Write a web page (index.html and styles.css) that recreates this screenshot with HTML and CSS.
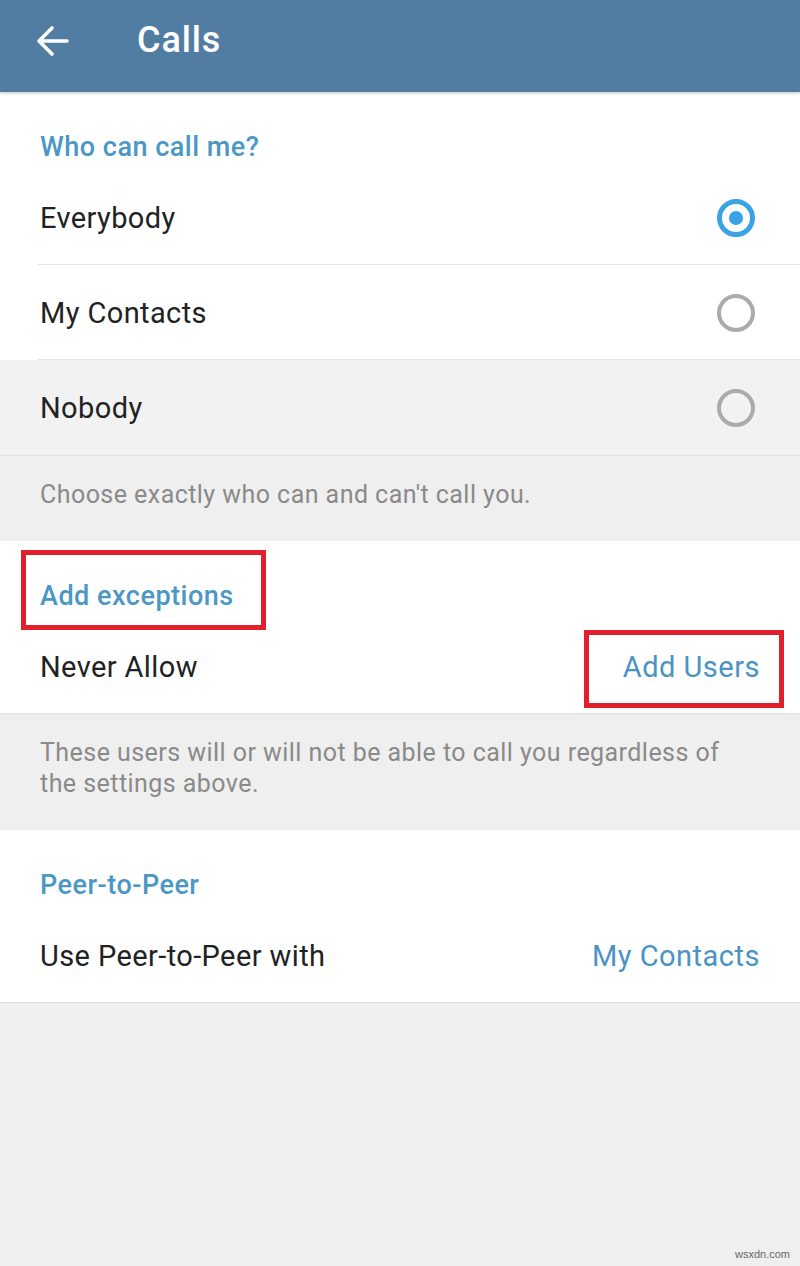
FILE: index.html
```html
<!DOCTYPE html>
<html lang="en">
<head>
<meta charset="utf-8">
<title>Calls</title>
<link rel="stylesheet" href="styles.css">
</head>
<body>
<div class="screen">
  <header class="appbar">
    <svg class="back" width="34" height="34" viewBox="0 0 34 34" aria-hidden="true">
      <path d="M3 17H31M16 4L3 17L16 30" fill="none" stroke="#fff" stroke-width="3.6" stroke-linecap="round" stroke-linejoin="round"/>
    </svg>
    <h1 class="title">Calls</h1>
  </header>

  <section class="section">
    <div class="sec-head">Who can call me?</div>
    <div class="row divided">
      <span class="label">Everybody</span>
      <span class="radio checked"></span>
    </div>
    <div class="row divided">
      <span class="label">My Contacts</span>
      <span class="radio"></span>
    </div>
    <div class="row pressed">
      <span class="label">Nobody</span>
      <span class="radio"></span>
    </div>
  </section>
  <div class="info">Choose exactly who can and can't call you.</div>

  <section class="section marked">
    <div class="sec-head">Add exceptions</div>
    <div class="row">
      <span class="label">Never Allow</span>
      <span class="value">Add Users</span>
    </div>
    <span class="mark mark-head"></span>
    <span class="mark mark-value"></span>
  </section>
  <div class="info">These users will or will not be able to call you regardless of the settings above.</div>

  <section class="section">
    <div class="sec-head">Peer-to-Peer</div>
    <div class="row">
      <span class="label">Use Peer-to-Peer with</span>
      <span class="value">My Contacts</span>
    </div>
  </section>
  <div class="filler">
    <span class="watermark">wsxdn.com</span>
  </div>
</div>
</body>
</html>
```

FILE: styles.css
```css
* { box-sizing: border-box; }

html, body {
  margin: 0;
  padding: 0;
  background: #efefef;
}

body {
  font-family: Roboto, "Noto Sans", "Liberation Sans", sans-serif;
  color: #222222;
}

.screen {
  width: 800px;
  min-height: 1266px;
  display: flex;
  flex-direction: column;
}

.appbar {
  height: 92px;
  background: #527da3;
  display: flex;
  align-items: center;
  padding-left: 36px;
  padding-bottom: 12px;
  box-shadow: 0 1px 3px rgba(0, 0, 0, 0.25);
  position: relative;
  z-index: 1;
}

.back {
  display: block;
  margin-top: 1px;
}

.title {
  margin: 0 0 0 67px;
  font-size: 36px;
  font-weight: 500;
  letter-spacing: 0.9px;
  color: #ffffff;
  line-height: 40px;
}

.section {
  background: #ffffff;
  display: flex;
  flex-direction: column;
}

.marked {
  position: relative;
}

.sec-head {
  height: 78px;
  padding: 40px 40px 0;
  font-size: 27px;
  letter-spacing: 0.5px;
  line-height: 30px;
  font-weight: 500;
  color: #4b97c5;
}

.row {
  height: 94px;
  padding: 2px 40px 0;
  display: flex;
  align-items: center;
  justify-content: space-between;
  position: relative;
}

.row.divided {
  height: 95px;
  padding-top: 0;
}

.row.divided::after {
  content: "";
  position: absolute;
  left: 38px;
  right: 0;
  bottom: 0;
  height: 1px;
  background: #e3e3e3;
}

.row.pressed {
  background: #f2f2f2;
  height: 95px;
  padding-top: 0;
}

.label {
  font-size: 29px;
  letter-spacing: 0.4px;
  line-height: 32px;
  color: #222222;
}

.value {
  font-size: 29px;
  letter-spacing: 0.5px;
  line-height: 32px;
  color: #4a93c3;
}

.radio {
  width: 38px;
  height: 38px;
  border-radius: 50%;
  border: 4px solid #ababab;
  margin-right: 5px;
  display: flex;
  align-items: center;
  justify-content: center;
}

.radio.checked {
  border: 5px solid #3aa3e6;
}

.radio.checked::after {
  content: "";
  width: 14px;
  height: 14px;
  border-radius: 50%;
  background: #3aa3e6;
}

.info {
  background: #efefef;
  padding: 24px 40px 31px;
  font-size: 25px;
  letter-spacing: 0.45px;
  line-height: 31px;
  color: #8a8a8a;
  box-shadow: inset 0 1px 1px rgba(0, 0, 0, 0.06);
}

.mark {
  position: absolute;
  border: 5px solid #e2202b;
}

.mark-head {
  left: 21px;
  top: 9px;
  width: 245px;
  height: 80px;
}

.mark-value {
  left: 584px;
  top: 89px;
  width: 200px;
  height: 78px;
}

.filler {
  flex: 1;
  display: flex;
  align-items: flex-end;
  justify-content: flex-end;
  padding: 0 10px 6px 0;
  box-shadow: inset 0 1px 1px rgba(0, 0, 0, 0.06);
}

.watermark {
  font-family: "Liberation Sans", Arial, sans-serif;
  font-size: 11px;
  color: #666666;
}
```
